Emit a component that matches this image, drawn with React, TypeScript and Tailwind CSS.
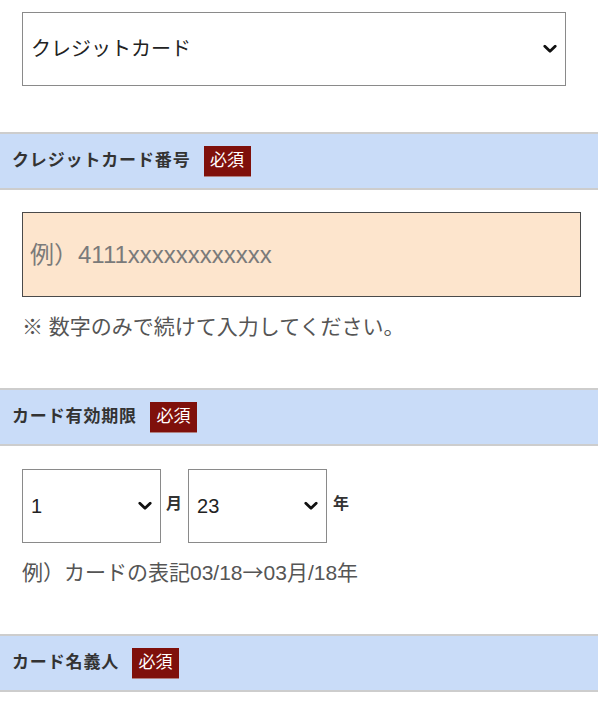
import { useState } from "react";

const FONT = "font-['Liberation_Sans','Noto_Sans_CJK_JP',sans-serif]";

function SectionHeader({ label }: { label: string }) {
  return (
    <div className="h-[58px] bg-[#c9dcf8] border-y-2 border-[#cdcdcd] flex items-center pl-3 gap-[13px]">
      <span className="text-[17px] font-bold text-[#333] tracking-[0.05em]">{label}</span>
      <span className="bg-[#7f100b] text-white text-[17px] leading-[30px] h-[30px] w-[47px] text-center shadow-[0_1px_0_#b08080]">
        必須
      </span>
    </div>
  );
}

function Chevron() {
  return (
    <svg
      className="pointer-events-none absolute right-[9px] top-1/2 -translate-y-1/2"
      width="14"
      height="9"
      viewBox="0 0 14 9"
      fill="none"
    >
      <path d="M1.8 1.8 L7 6.8 L12.2 1.8" stroke="#111" strokeWidth="2.8" strokeLinecap="round" strokeLinejoin="round" />
    </svg>
  );
}

function Select({
  value,
  onChange,
  options,
  width,
}: {
  value: string;
  onChange: (v: string) => void;
  options: { value: string; label: string }[];
  width: string;
}) {
  return (
    <div className={`relative ${width}`}>
      <select
        value={value}
        onChange={(e) => onChange(e.target.value)}
        className="appearance-none h-[74px] w-full border border-[#8a8a8a] bg-white pl-2 pr-6 text-[20px] text-[#222] outline-none"
      >
        {options.map((o) => (
          <option key={o.value} value={o.value}>{o.label}</option>
        ))}
      </select>
      <Chevron />
    </div>
  );
}

export default function App() {
  const [payment, setPayment] = useState("credit");
  const [month, setMonth] = useState("1");
  const [year, setYear] = useState("23");
  const [cardNo, setCardNo] = useState("");

  return (
    <div className={`${FONT} bg-white min-h-screen text-[#333]`}>
      {/* ── payment method ── */}
      <div className="pt-3 pb-[46px] px-[22px]">
        <Select
          value={payment}
          onChange={setPayment}
          width="w-[544px]"
          options={[
            { value: "credit", label: "クレジットカード" },
            { value: "bank", label: "銀行振込" },
          ]}
        />
      </div>

      {/* ── card number ── */}
      <SectionHeader label="クレジットカード番号" />
      <div className="pt-[22px] pb-[46px] px-[22px]">
        <input
          value={cardNo}
          onChange={(e) => setCardNo(e.target.value)}
          placeholder="例）4111xxxxxxxxxxxx"
          className="block h-[85px] w-[559px] border border-[#4a4a4a] bg-[#fde5cd] px-[7px] text-[24px] text-[#333] placeholder:text-[#7a7a7a] outline-none"
        />
        <p className="mt-[15px] text-[21px] leading-[30px] text-[#555]">※ 数字のみで続けて入力してください。</p>
      </div>

      {/* ── expiry ── */}
      <SectionHeader label="カード有効期限" />
      <div className="pt-[23px] pb-[46px] px-[22px]">
        <div className="flex items-center">
          <Select
            value={month}
            onChange={setMonth}
            width="w-[139px]"
            options={Array.from({ length: 12 }, (_, i) => ({ value: String(i + 1), label: String(i + 1) }))}
          />
          <span className="ml-[5px] mr-[6px] text-[16px] font-bold text-[#333] -mt-1">月</span>
          <Select
            value={year}
            onChange={setYear}
            width="w-[139px]"
            options={["23", "24", "25", "26", "27", "28", "29", "30"].map((y) => ({ value: y, label: y }))}
          />
          <span className="ml-[6px] text-[16px] font-bold text-[#333] -mt-1">年</span>
        </div>
        <p className="mt-[15px] h-[30px] text-[21px] leading-[30px] text-[#555]">
          例）カードの表記03/18<span className="font-['Noto_Sans_CJK_JP',sans-serif] leading-none">→</span>03月/18年
        </p>
      </div>

      {/* ── card holder ── */}
      <SectionHeader label="カード名義人" />
    </div>
  );
}
